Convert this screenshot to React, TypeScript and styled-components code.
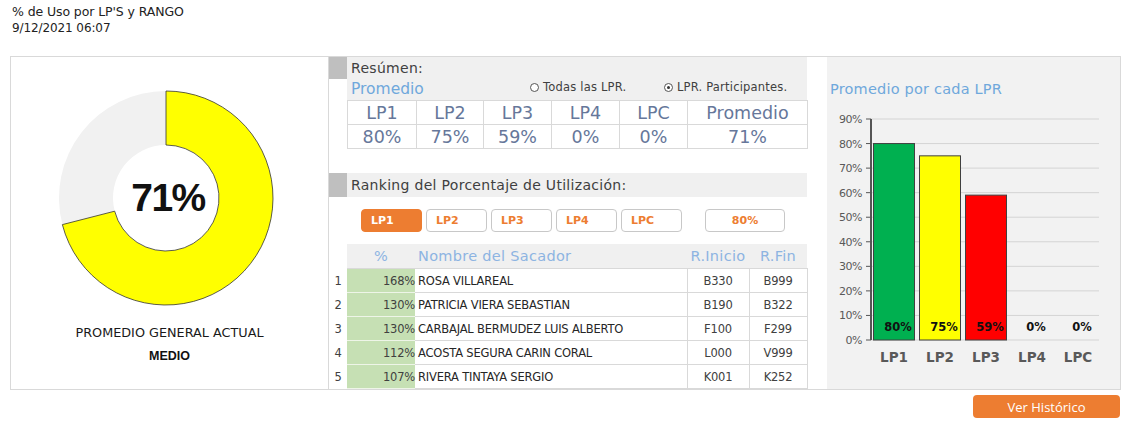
import React from "react";
import styled, { createGlobalStyle } from "styled-components";

const FONT = `"DejaVu Sans", "Liberation Sans", sans-serif`;

const Global = createGlobalStyle`
  html, body { margin: 0; padding: 0; background: #fff; }
  body { font-family: ${FONT}; color: #222; }
`;

const Page = styled.div`
  width: 1131px;
  height: 436px;
  position: relative;
  overflow: hidden;
`;

const Header = styled.div`
  padding: 4px 0 0 12px;
  height: 56px;
  box-sizing: border-box;
  line-height: 16px;
  color: #222;
`;

const HeadTitle = styled.div`
  font-size: 12.5px;
  letter-spacing: -0.1px;
`;

const HeadDate = styled.div`
  font-size: 12px;
  letter-spacing: -0.1px;
`;

const Panel = styled.div`
  margin-left: 10px;
  width: 1111px;
  height: 334px;
  box-sizing: border-box;
  border: 1px solid #d9d9d9;
  display: flex;
`;

const Left = styled.div`
  width: 317px;
  display: flex;
  flex-direction: column;
  align-items: center;
  padding-top: 33px;
  box-sizing: border-box;
`;

const DonutWrap = styled.div`
  position: relative;
  width: 216px;
  height: 216px;
  margin-left: -7px;
`;

const DonutLabel = styled.div`
  position: absolute;
  inset: 0;
  display: flex;
  align-items: center;
  justify-content: center;
  font-family: "Liberation Sans", sans-serif;
  font-size: 39px;
  font-weight: bold;
  color: #111;
  letter-spacing: -1.5px;
  padding-left: 4px;
`;

const Caption = styled.div`
  margin-top: 19px;
  font-size: 12.8px;
  color: #1a1a1a;
  letter-spacing: 0;
`;

const CaptionBold = styled.div`
  margin-top: 9px;
  font-size: 12.5px;
  font-weight: bold;
  font-family: "Liberation Sans", sans-serif;
  color: #111;
`;

const Middle = styled.div`
  width: 479px;
  border-left: 1px solid #d9d9d9;
  display: flex;
  flex-direction: column;
`;

const Row = styled.div<{ $mt?: number }>`
  display: flex;
  margin-top: ${(p) => p.$mt ?? 0}px;
`;

const Gutter = styled.div<{ $h?: number; $fill?: boolean }>`
  width: 18px;
  flex: none;
  align-self: flex-start;
  height: ${(p) => (p.$h ? `${p.$h}px` : "auto")};
  background: ${(p) => (p.$fill ? "#bfbfbf" : "transparent")};
`;

const GrayBox = styled.div<{ $h: number }>`
  width: 460px;
  height: ${(p) => p.$h}px;
  background: #f0f0f0;
  box-sizing: border-box;
  padding-left: 4px;
`;

const SectionTitle = styled.div<{ $lh?: number }>`
  font-size: 14px;
  line-height: ${(p) => p.$lh ?? 22}px;
  color: #404040;
  letter-spacing: 0.3px;
`;

const SubRow = styled.div`
  display: flex;
  align-items: center;
  height: 20px;
`;

const BlueLabel = styled.div`
  font-size: 15.5px;
  color: #6fa8dc;
  width: 179px;
`;

const Radio = styled.div<{ $w: number }>`
  display: flex;
  align-items: center;
  font-size: 11.5px;
  color: #404040;
  width: ${(p) => p.$w}px;
  letter-spacing: 0.2px;
  margin-top: -4px;
`;

const Circle = styled.span<{ $on?: boolean }>`
  width: 7px;
  height: 7px;
  border-radius: 50%;
  border: 1px solid #555;
  background: #fff;
  margin-right: 4px;
  position: relative;
  &::after {
    content: "";
    display: ${(p) => (p.$on ? "block" : "none")};
    position: absolute;
    left: 2px;
    top: 2px;
    width: 3px;
    height: 3px;
    border-radius: 50%;
    background: #333;
  }
`;

const SummaryTable = styled.table`
  width: 460px;
  border-collapse: collapse;
  table-layout: fixed;
  margin-left: 18px;
  td {
    border: 1px solid #d9d9d9;
    height: 23px;
    padding: 0;
    text-align: center;
    font-size: 17.5px;
    color: #66779a;
    line-height: 20px;
  }
`;

const ButtonRow = styled.div`
  display: flex;
  gap: 4px;
  padding: 12px 0 0 32px;
  height: 48px;
  box-sizing: border-box;
`;

const LpButton = styled.div<{ $active?: boolean; $w?: number; $ml?: number }>`
  width: ${(p) => p.$w ?? 61}px;
  margin-left: ${(p) => p.$ml ?? 0}px;
  height: 23px;
  box-sizing: border-box;
  border: 1px solid ${(p) => (p.$active ? "#ed7d31" : "#c8c8c8")};
  background: ${(p) => (p.$active ? "#ed7d31" : "#fff")};
  color: ${(p) => (p.$active ? "#fff" : "#ed7d31")};
  border-radius: 4px;
  font-size: 11px;
  font-weight: bold;
  display: flex;
  align-items: center;
  padding-left: ${(p) => (p.$w ? 0 : 9)}px;
  justify-content: ${(p) => (p.$w ? "center" : "flex-start")};
`;

const RankTable = styled.table`
  width: 478px;
  border-collapse: collapse;
  table-layout: fixed;
  font-size: 11.5px;
  letter-spacing: -0.2px;
  td, th {
    padding: 0;
    height: 23px;
    border-bottom: 1px solid #d9d9d9;
  }
  th {
    background: #f0f0f0;
    font-weight: normal;
    color: #8db4e2;
    font-size: 14.5px;
    letter-spacing: 0.3px;
    height: 24px;
  }
  th.gut {
    background: #fff;
    border-bottom: none;
  }
`;

const NumCell = styled.td`
  text-align: center;
  color: #404040;
  border-bottom: none !important;
  background: #fff;
`;

const PctCell = styled.td`
  background: #c6e0b4;
  text-align: right;
  color: #404040;
  border-bottom: 1px solid #eef5e8 !important;
`;

const NameCell = styled.td`
  color: #262626;
  padding-left: 3px !important;
  white-space: nowrap;
  overflow: hidden;
`;

const CodeCell = styled.td`
  text-align: center;
  color: #404040;
  border-left: 1px solid #d9d9d9;
  border-right: 1px solid #d9d9d9;
`;

const Right = styled.div`
  width: 293px;
  margin-left: 19px;
  background: #f2f2f2;
  display: flex;
  flex-direction: column;
`;

const ChartTitle = styled.div`
  font-size: 14.5px;
  color: #6fa8dc;
  padding: 24px 0 0 3px;
  letter-spacing: 0.2px;
`;

const HistButton = styled.button`
  position: absolute;
  left: 973px;
  top: 395px;
  width: 147px;
  height: 23px;
  border: none;
  border-radius: 4px;
  background: #ed7d31;
  color: #fff;
  font-family: "Open Sans", sans-serif;
  font-size: 13px;
  padding: 0;
  cursor: pointer;
`;

const Donut = () => {
  const cx = 108, cy = 108, R = 107, r = 53;
  const pct = 0.71;
  const a = pct * 2 * Math.PI;
  const x1 = cx + R * Math.sin(a), y1 = cy - R * Math.cos(a);
  const x2 = cx + r * Math.sin(a), y2 = cy - r * Math.cos(a);
  const path = `M ${cx} ${cy - R} A ${R} ${R} 0 1 1 ${x1} ${y1} L ${x2} ${y2} A ${r} ${r} 0 1 0 ${cx} ${cy - r} Z`;
  const rest = `M ${x1} ${y1} A ${R} ${R} 0 0 1 ${cx} ${cy - R} L ${cx} ${cy - r} A ${r} ${r} 0 0 0 ${x2} ${y2} Z`;
  return (
    <svg width="216" height="216" viewBox="0 0 216 216">
      <path d={rest} fill="#f1f1f1" />
      <path d={path} fill="#ffff00" stroke="#333" strokeWidth="0.8" />
    </svg>
  );
};

const Chart = () => {
  const x0 = 44;
  const yTop = 9;
  const yBot = 230;
  const step = (yBot - yTop) / 9;
  const ticks = Array.from({ length: 10 }, (_, i) => i);
  const bars = [
    { l: "LP1", v: 80, c: "#00b050" },
    { l: "LP2", v: 75, c: "#ffff00" },
    { l: "LP3", v: 59, c: "#ff0000" },
    { l: "LP4", v: 0, c: "none" },
    { l: "LPC", v: 0, c: "none" },
  ];
  const yOf = (v: number) => yBot - (v / 10) * step;
  return (
    <svg width="293" height="270" viewBox="0 0 293 270" style={{ marginTop: 13 }}>
      {ticks.map((i) => (
        <g key={i}>
          <line x1={x0} x2={272} y1={yOf(i * 10)} y2={yOf(i * 10)} stroke="#d4d4d4" strokeWidth="1" />
          <line x1={x0 - 5} x2={x0} y1={yOf(i * 10)} y2={yOf(i * 10)} stroke="#555" strokeWidth="1" />
          <text x={x0 - 9} y={yOf(i * 10) + 4} textAnchor="end" fontSize="11" fill="#595959" fontFamily={FONT} letterSpacing="-0.5">
            {i * 10}%
          </text>
        </g>
      ))}
      <line x1={x0} x2={x0} y1={yTop} y2={yBot} stroke="#555" strokeWidth="2" />
      {bars.map((b, i) => {
        const cx = x0 + 23 + i * 46;
        return (
          <g key={b.l}>
            {b.v > 0 && (
              <rect x={cx - 20.5} y={yOf(b.v)} width={41} height={yBot - yOf(b.v)} fill={b.c} stroke="#404040" strokeWidth="1" />
            )}
            <text x={cx + 4} y={yBot - 9} textAnchor="middle" fontSize="11.5" fontWeight="bold" fill="#111" fontFamily={FONT}>
              {b.v}%
            </text>
            <text x={cx} y={yBot + 22} textAnchor="middle" fontSize="13.5" fontWeight="bold" fill="#595959" fontFamily={FONT}>
              {b.l}
            </text>
          </g>
        );
      })}
    </svg>
  );
};

const rows = [
  ["168%", "ROSA VILLAREAL", "B330", "B999"],
  ["130%", "PATRICIA VIERA SEBASTIAN", "B190", "B322"],
  ["130%", "CARBAJAL BERMUDEZ LUIS ALBERTO", "F100", "F299"],
  ["112%", "ACOSTA SEGURA CARIN CORAL", "L000", "V999"],
  ["107%", "RIVERA TINTAYA SERGIO", "K001", "K252"],
];

export default function App() {
  return (
    <Page>
      <Global />
      <Header>
        <HeadTitle>% de Uso por LP'S y RANGO</HeadTitle>
        <HeadDate>9/12/2021 06:07</HeadDate>
      </Header>
      <Panel>
        <Left>
          <DonutWrap>
            <Donut />
            <DonutLabel>71%</DonutLabel>
          </DonutWrap>
          <Caption>PROMEDIO GENERAL ACTUAL</Caption>
          <CaptionBold>MEDIO</CaptionBold>
        </Left>
        <Middle>
          <Row>
            <Gutter $h={22} $fill />
            <GrayBox $h={43}>
              <SectionTitle>Resúmen:</SectionTitle>
              <SubRow>
                <BlueLabel>Promedio</BlueLabel>
                <Radio $w={134}>
                  <Circle />
                  Todas las LPR.
                </Radio>
                <Radio $w={140}>
                  <Circle $on />
                  LPR. Participantes.
                </Radio>
              </SubRow>
            </GrayBox>
          </Row>
          <SummaryTable>
            <colgroup>
              <col style={{ width: 69 }} />
              <col style={{ width: 67 }} />
              <col style={{ width: 68 }} />
              <col style={{ width: 68 }} />
              <col style={{ width: 68 }} />
              <col style={{ width: 120 }} />
            </colgroup>
            <tbody>
              <tr>
                <td>LP1</td><td>LP2</td><td>LP3</td><td>LP4</td><td>LPC</td><td>Promedio</td>
              </tr>
              <tr>
                <td>80%</td><td>75%</td><td>59%</td><td>0%</td><td>0%</td><td>71%</td>
              </tr>
            </tbody>
          </SummaryTable>
          <Row $mt={24}>
            <Gutter $h={24} $fill />
            <GrayBox $h={24}>
              <SectionTitle $lh={25}>Ranking del Porcentaje de Utilización:</SectionTitle>
            </GrayBox>
          </Row>
          <ButtonRow>
            <LpButton $active>LP1</LpButton>
            <LpButton>LP2</LpButton>
            <LpButton>LP3</LpButton>
            <LpButton>LP4</LpButton>
            <LpButton>LPC</LpButton>
            <LpButton $w={80} $ml={19}>80%</LpButton>
          </ButtonRow>
          <RankTable>
            <colgroup>
              <col style={{ width: 18 }} />
              <col style={{ width: 68 }} />
              <col style={{ width: 272 }} />
              <col style={{ width: 62 }} />
              <col style={{ width: 58 }} />
            </colgroup>
            <thead>
              <tr>
                <th className="gut" />
                <th>%</th>
                <th style={{ textAlign: "left", paddingLeft: 3 }}>Nombre del Sacador</th>
                <th>R.Inicio</th>
                <th>R.Fin</th>
              </tr>
            </thead>
            <tbody>
              {rows.map((r, i) => (
                <tr key={i}>
                  <NumCell>{i + 1}</NumCell>
                  <PctCell>{r[0]}</PctCell>
                  <NameCell>{r[1]}</NameCell>
                  <CodeCell>{r[2]}</CodeCell>
                  <CodeCell>{r[3]}</CodeCell>
                </tr>
              ))}
            </tbody>
          </RankTable>
        </Middle>
        <Right>
          <ChartTitle>Promedio por cada LPR</ChartTitle>
          <Chart />
        </Right>
      </Panel>
      <HistButton>Ver Histórico</HistButton>
    </Page>
  );
}
